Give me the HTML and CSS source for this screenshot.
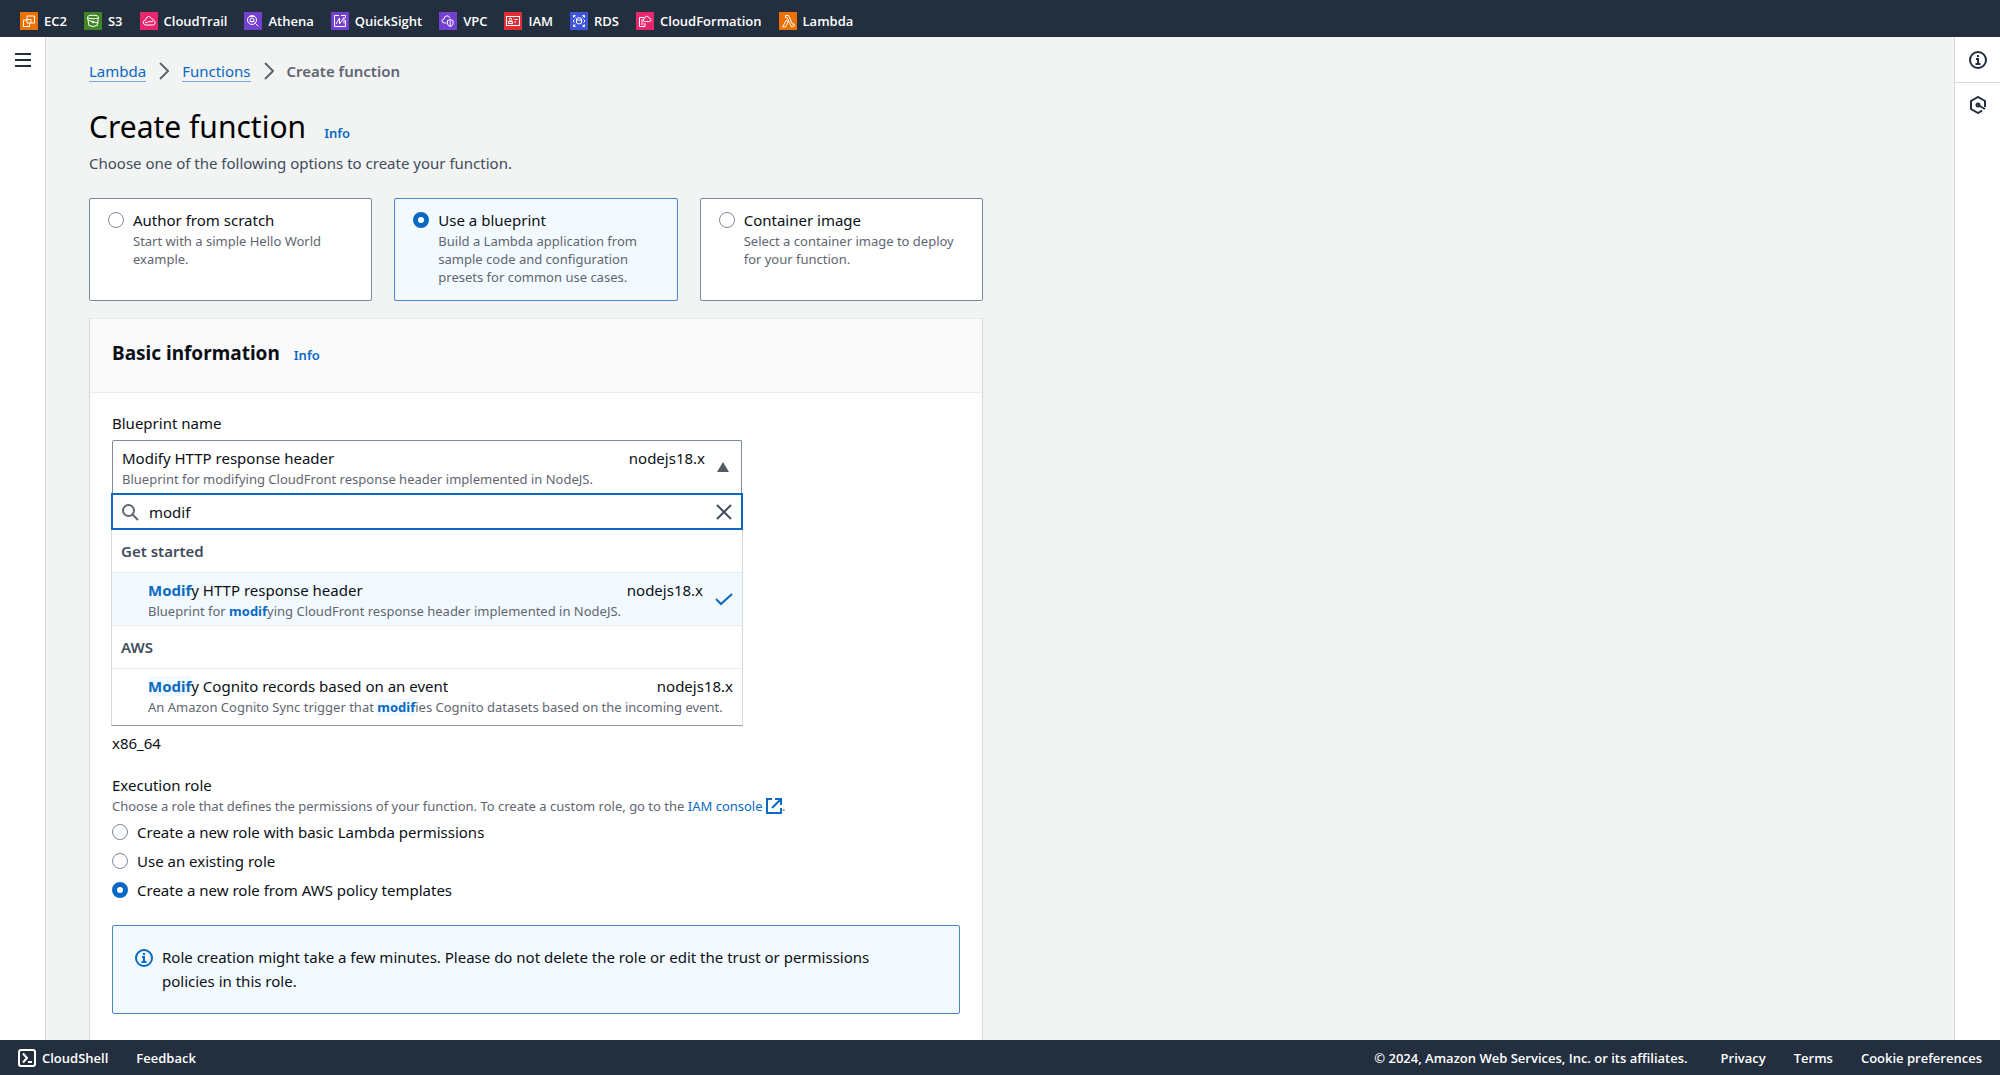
FILE: index.html
```
<!DOCTYPE html>
<html lang="en">
<head>
<meta charset="utf-8">
<meta name="viewport" content="width=device-width, initial-scale=1">
<title>Create function - Lambda</title>
<link rel="stylesheet" href="styles.css">
</head>
<body>
<div class="app">
  <nav class="favorites" aria-label="Favorite services">
    <a href="#"><svg class="service-icon orange" viewBox="0 0 18 18"><path d="M7 4h7.500v7H7zM9.500 11v3.500h-6V8H7M7.500 7.500h3.500v3.500"/></svg>EC2</a>
    <a href="#"><svg class="service-icon green" viewBox="0 0 18 18"><ellipse cx="9" cy="5" rx="5.500" ry="1.800"/><path d="M3.500 5l1.400 8.500q4 2 8.200 0L14.500 5M4 8l5 2 5.500.8"/><circle cx="9" cy="10" r=".8"/></svg>S3</a>
    <a href="#"><svg class="service-icon pink" viewBox="0 0 18 18"><path d="M5.500 13H13a2.300 2.300 0 0 0 .5-4.500q-.3-1.800-2-1.800-1-2.200-3-2.200-2.600.2-2.800 3.500-2.500.6-2.500 2.500T5.500 13z"/><path d="M5 11q4-2 8-1.500"/></svg>CloudTrail</a>
    <a href="#"><svg class="service-icon purple" viewBox="0 0 18 18"><circle cx="8" cy="8" r="4.500"/><circle cx="8" cy="8" r="2"/><path d="M11.300 11.300l3 3M5 4.500l6 0M5.500 9.500h5"/></svg>Athena</a>
    <a href="#"><svg class="service-icon purple" viewBox="0 0 18 18"><path d="M8 3.500H3.500v11h11V8M10 3.500h4.500V6M5 12L8.500 6v6L13 5.500v6"/></svg>QuickSight</a>
    <a href="#"><svg class="service-icon purple" viewBox="0 0 18 18"><path d="M7.500 11H5.500Q3 10.700 3 8.800q.2-1.600 2-1.800.2-3 3-3.200 2.300 0 3 2.200"/><path d="M8.500 8.500q2-.2 2.700-1.500.8 1.300 2.800 1.500v3.500q-.5 1.800-2.800 2.500-2.200-.7-2.700-2.500zM11.200 8v6"/></svg>VPC</a>
    <a href="#"><svg class="service-icon red" viewBox="0 0 18 18"><rect x="2.500" y="4.500" width="13" height="9"/><circle cx="6.500" cy="7.300" r="1.200"/><path d="M4.500 11.500V9.500h4v2zM10.500 7.500h3M10.500 10h1.500"/></svg>IAM</a>
    <a href="#"><svg class="service-icon blue" viewBox="0 0 18 18"><ellipse cx="9" cy="7" rx="2.500" ry="1.200"/><path d="M6.500 7v4q2.500 2 5 0V7M3.500 5.500v-2h2M12.500 3.500h2v2M3.500 12.500v2h2M12.500 14.500h2v-2M4.500 7.500L3 9l1.500 1.500M13.500 7.500L15 9l-1.500 1.500M4 4l1.500 1.500M14 4l-1.500 1.500M4 14l1.500-1.500M14 14l-1.500-1.500"/></svg>RDS</a>
    <a href="#"><svg class="service-icon pink" viewBox="0 0 18 18"><path d="M8 5.500H3.500v9H9V11M5 8h3M5 10h2.500M5 12h2.500"/><path d="M9.500 9.500h4q1.800-.2 1.500-2-.4-1.300-1.800-1.300-.7-2.200-2.700-2-1.800.3-1.800 2.300-1.500.3-1.300 1.700.3 1.300 2.100 1.300z"/></svg>CloudFormation</a>
    <a href="#"><svg class="service-icon orange" viewBox="0 0 18 18"><path d="M6.500 3.500h3l4 8.800 1.300-.5.7 2-3 1.200L8 5.500H6.500zM7.500 8L3.500 15h3l2.500-4.500z"/></svg>Lambda</a>
  </nav>

  <div class="workspace">
    <aside class="rail rail-left">
      <button class="icon-button" type="button" aria-label="Open navigation"><svg class="icon" viewBox="0 0 18 18"><path d="M1 3h16M1 9h16M1 15h16"/></svg></button>
    </aside>

    <main class="content">
      <nav class="breadcrumbs" aria-label="Breadcrumbs">
        <a href="#">Lambda</a>
        <svg class="chevron" viewBox="0 0 10 18"><path d="M1 1l8 8-8 8"/></svg>
        <a href="#">Functions</a>
        <svg class="chevron" viewBox="0 0 10 18"><path d="M1 1l8 8-8 8"/></svg>
        <span class="current">Create function</span>
      </nav>

      <header class="page-header">
        <div class="title-row"><h1>Create function</h1><a class="info" href="#">Info</a></div>
        <p>Choose one of the following options to create your function.</p>
      </header>

      <div class="tiles" role="radiogroup" aria-label="Creation method">
        <label class="tile"><input type="radio" name="method"><span><span class="tile-title">Author from scratch</span><span class="hint">Start with a simple Hello World example.</span></span></label>
        <label class="tile selected"><input type="radio" name="method" checked><span><span class="tile-title">Use a blueprint</span><span class="hint">Build a Lambda application from sample code and configuration presets for common use cases.</span></span></label>
        <label class="tile"><input type="radio" name="method"><span><span class="tile-title">Container image</span><span class="hint">Select a container image to deploy for your function.</span></span></label>
      </div>

      <section class="panel">
        <header class="panel-header"><h2>Basic information</h2><a class="info" href="#">Info</a></header>
        <div class="panel-body">
          <div class="select">
            <label class="field-label" for="blueprint">Blueprint name</label>
            <button id="blueprint" class="select-trigger" type="button" aria-haspopup="listbox" aria-expanded="true">
              <span class="option-text">
                <span class="option-line"><span>Modify HTTP response header</span><span>nodejs18.x</span></span>
                <span class="hint">Blueprint for modifying CloudFront response header implemented in NodeJS.</span>
              </span>
              <svg class="caret" viewBox="0 0 12 10"><path d="M6 0l6 10H0z"/></svg>
            </button>
            <div class="dropdown">
              <div class="search">
                <svg class="icon muted" viewBox="0 0 18 18"><circle cx="7.500" cy="7.500" r="5.500"/><path d="M11.500 11.500L17 17"/></svg>
                <input type="text" value="modif" aria-label="Search blueprints">
                <button class="icon-button" type="button" aria-label="Clear"><svg class="icon" viewBox="0 0 18 18"><path d="M2 2l14 14M16 2L2 16"/></svg></button>
              </div>
              <div role="listbox" aria-label="Blueprints">
                <div class="group">Get started</div>
                <div class="option chosen" role="option" aria-selected="true">
                  <span class="option-text">
                    <span class="option-line"><span><mark>Modif</mark>y HTTP response header</span><span>nodejs18.x</span></span>
                    <span class="hint">Blueprint for <mark>modif</mark>ying CloudFront response header implemented in NodeJS.</span>
                  </span>
                  <svg class="icon check" viewBox="0 0 18 18"><path d="M1 9l5 5L17 4"/></svg>
                </div>
                <div class="group">AWS</div>
                <div class="option" role="option" aria-selected="false">
                  <span class="option-text">
                    <span class="option-line"><span><mark>Modif</mark>y Cognito records based on an event</span><span>nodejs18.x</span></span>
                    <span class="hint">An Amazon Cognito Sync trigger that <mark>modif</mark>ies Cognito datasets based on the incoming event.</span>
                  </span>
                </div>
              </div>
            </div>
          </div>

          <p class="architecture">x86_64</p>

          <fieldset class="roles">
            <legend>Execution role</legend>
            <p class="hint">Choose a role that defines the permissions of your function. To create a custom role, go to the <a href="#">IAM console <svg class="external" viewBox="0 0 16 16"><path d="M6 1H1v14h14v-5M9 1h6v6M15 1L6 10"/></svg></a>.</p>
            <label><input type="radio" name="role">Create a new role with basic Lambda permissions</label>
            <label><input type="radio" name="role">Use an existing role</label>
            <label><input type="radio" name="role" checked>Create a new role from AWS policy templates</label>
          </fieldset>

          <div class="alert" role="status">
            <svg class="icon" viewBox="0 0 18 18"><circle cx="9" cy="9" r="8"/><path d="M9 4v2M7 8h2v5M6.500 13h5"/></svg>
            <p>Role creation might take a few minutes. Please do not delete the role or edit the trust or permissions policies in this role.</p>
          </div>
        </div>
      </section>
    </main>

    <aside class="rail rail-right">
      <button class="icon-button" type="button" aria-label="Info"><svg class="icon" viewBox="0 0 18 18"><circle cx="9" cy="9" r="8"/><path d="M9 4v2M7 8h2v5M6.500 13h5"/></svg></button>
      <button class="icon-button" type="button" aria-label="Diagnose"><svg class="icon" viewBox="0 0 18 18"><path d="M16 11V5L9 1 2 5v8l7 4 4-2.300"/><path d="M9 9l7 4"/><circle cx="9" cy="9" r="1.500"/></svg></button>
    </aside>
  </div>

  <footer class="footer">
    <a href="#"><svg class="icon" viewBox="0 0 18 18"><rect x="1" y="1" width="16" height="16" rx="2"/><path d="M5 4.500L9 9l-4 4.500M10 13h4"/></svg>CloudShell</a>
    <a href="#">Feedback</a>
    <span class="copyright">© 2024, Amazon Web Services, Inc. or its affiliates.</span>
    <a href="#">Privacy</a>
    <a href="#">Terms</a>
    <a href="#">Cookie preferences</a>
  </footer>
</div>
</body>
</html>
```

FILE: styles.css
```
:root {
  --navy: #232f3e;
  --blue: #0969c3;
  --pale: #f3faff;
  --text: #0b0f16;
  --muted: #5f6672;
  --line: #d5dbdb;
}

* { box-sizing: border-box; }

body {
  margin: 0;
  background: #f2f3f3;
  color: var(--text);
  font: 15px/24px "Noto Sans", "Open Sans", sans-serif;
}

h1, h2, p { margin: 0; }
a { color: var(--blue); text-decoration: none; }
button, input { font: inherit; color: inherit; }

svg {
  flex: none;
  fill: none;
  stroke: currentColor;
}

.app {
  display: flex;
  flex-direction: column;
  height: 100vh;
}

.icon {
  width: 18px;
  height: 18px;
  stroke-width: 2;
}

.icon-button {
  display: flex;
  padding: 0;
  border: 0;
  background: none;
  color: #414d5c;
}

/* Top bar */
.favorites {
  display: flex;
  align-items: center;
  gap: 17px;
  height: 37px;
  padding: 4px 20px 0;
  flex: none;
  background: var(--navy);
}

.favorites a, .footer a {
  display: flex;
  align-items: center;
  gap: 6px;
  color: #fff;
}

.favorites, .footer {
  color: #fff;
  font-family: "Open Sans", "Noto Sans", sans-serif;
  font-size: 13px;
  line-height: 20px;
  font-weight: 600;
}

.service-icon { width: 18px; height: 18px; }
.orange { background: #ed7100; }
.green { background: #3f8624; }
.pink { background: #e7266b; }
.purple { background: #7440d0; }
.red { background: #dd2f36; }
.blue { background: #3f55dc; }

/* Workspace */
.workspace {
  display: flex;
  flex: 1;
  min-height: 0;
}

.rail {
  width: 46px;
  flex: none;
  background: #fff;
}

.rail .icon-button {
  width: 100%;
  height: 45px;
  align-items: center;
  justify-content: center;
  color: var(--navy);
}

.rail-left { border-right: 1px solid var(--line); }
.rail-right { border-left: 1px solid var(--line); }
.rail-right .icon-button + .icon-button { border-top: 1px solid var(--line); }

.content {
  flex: 1;
  padding: 22px 43px 0;
  overflow: hidden;
}

.breadcrumbs {
  display: flex;
  align-items: center;
  gap: 13px;
}

.breadcrumbs a {
  line-height: 20px;
  border-bottom: 1px solid #7da7dc;
}

.breadcrumbs .current { color: var(--muted); font-weight: 600; }

.chevron {
  width: 10px;
  height: 18px;
  stroke: var(--muted);
  stroke-width: 2;
}

.page-header { padding: 24px 0 23px; }
.page-header p { color: #414d5c; padding-top: 4px; }

.title-row {
  display: flex;
  align-items: baseline;
  gap: 18px;
}

h1 { font-size: 30px; line-height: 40px; font-weight: 400; color: #000; }
h2 { font-size: 19px; line-height: 24px; }
.info { font-size: 13px; font-weight: 600; }

.hint {
  display: block;
  color: var(--muted);
  font-size: 13px;
  line-height: 18px;
}

/* Radio buttons */
input[type="radio"] {
  appearance: none;
  width: 16px;
  height: 16px;
  margin: 4px 0;
  flex: none;
  border: 1px solid #7d8998;
  border-radius: 50%;
  background: #fff;
}

input[type="radio"]:checked { border: 5px solid var(--blue); }

/* Tiles */
.tiles, .panel { max-width: 894px; }

.tiles {
  display: grid;
  grid-template-columns: repeat(3, 1fr);
  gap: 22px;
}

.tile {
  display: flex;
  gap: 9px;
  min-height: 103px;
  padding: 9px 18px;
  border: 1px solid #7d8998;
  border-radius: 2px;
  background: #fff;
}

.tile.selected { border-color: #4a86cc; background: var(--pale); }
.tile-title { display: block; }

/* Panel */
.panel {
  margin-top: 17px;
  border: 1px solid var(--line);
  border-top-color: #eaeded;
  background: #fff;
}

.panel-header {
  display: flex;
  align-items: baseline;
  gap: 14px;
  padding: 22px 22px 25px;
  border-bottom: 1px solid #eaeded;
  background: #fafafa;
}

.panel-body { padding: 18px 22px 80px; }

/* Select with its open list */
.select { max-width: 630px; }
.field-label { display: block; padding-bottom: 5px; }

.select-trigger {
  display: flex;
  align-items: center;
  gap: 12px;
  width: 100%;
  padding: 5px 12px 5px 9px;
  border: 1px solid #7d8998;
  border-bottom: 0;
  border-radius: 2px 2px 0 0;
  background: #fff;
  text-align: left;
}

.caret { width: 12px; height: 10px; fill: #545b64; stroke: none; }

.option-text { flex: 1; }
.option-line { display: flex; justify-content: space-between; }

.dropdown {
  margin: 0 -1px;
  border: 1px solid var(--line);
  border-top: 0;
  border-bottom-color: #8d99a5;
}

.search {
  display: flex;
  align-items: center;
  gap: 10px;
  height: 37px;
  margin: 0 -1px;
  padding: 0 8px;
  border: 2px solid var(--blue);
}

.search input {
  flex: 1;
  min-width: 0;
  padding: 0;
  border: 0;
  outline: 0;
  background: none;
}

.muted { color: var(--muted); }

.group {
  padding: 10px 9px;
  color: #414d5c;
  font-weight: 600;
  line-height: 22px;
}

.option {
  display: flex;
  align-items: center;
  gap: 12px;
  padding: 5px 9px 9px 36px;
  border-top: 1px solid #eaeded;
}

.option.chosen {
  padding-bottom: 5px;
  border-bottom: 1px solid #eaeded;
  background: var(--pale);
}

.check { color: var(--blue); }

mark { background: var(--pale); color: var(--blue); font-weight: 700; }

.architecture { padding-top: 5px; }

/* Execution role */
.roles {
  display: flex;
  flex-direction: column;
  gap: 5px;
  margin: 19px 0 0;
  padding: 0;
  border: 0;
}

legend { padding: 0; line-height: 23px; }
.roles label { display: flex; gap: 9px; }
.external { width: 16px; height: 16px; stroke-width: 2; vertical-align: -3px; }

.alert {
  display: flex;
  gap: 9px;
  margin-top: 23px;
  padding: 19px 72px 20px 22px;
  border: 1px solid #4a86cc;
  border-radius: 2px;
  background: var(--pale);
}

.alert .icon { margin-top: 4px; color: var(--blue); }

/* Footer */
.footer {
  display: flex;
  align-items: center;
  gap: 28px;
  height: 35px;
  padding: 0 18px;
  flex: none;
  background: var(--navy);
}

.copyright { margin-left: auto; padding-right: 5px; }
```
